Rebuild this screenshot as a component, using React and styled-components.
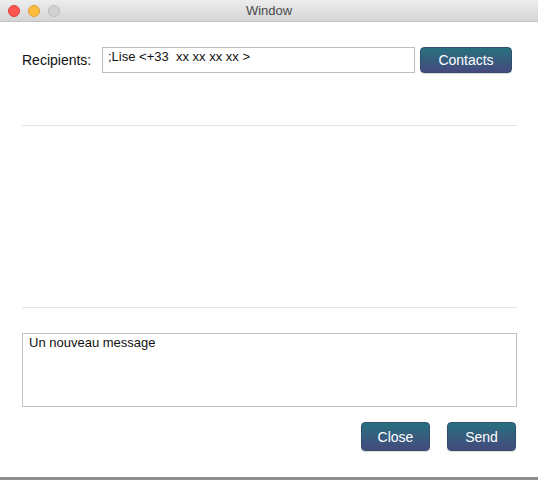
import React from "react";
import styled, { createGlobalStyle } from "styled-components";

const GlobalStyle = createGlobalStyle`
  html, body {
    margin: 0;
    padding: 0;
    background: #8f8f8f;
  }
  body {
    font-family: "Liberation Sans", Arial, sans-serif;
  }
`;

// whole mac-style window
const Window = styled.div`
  width: 538px;
  height: 477px;
  background: #ffffff;
  display: flex;
  flex-direction: column;
  box-shadow: 0 1px 0 #b5b5b5;
`;

const TitleBar = styled.div`
  height: 21px;
  border-bottom: 1px solid #c4c4c4;
  background: linear-gradient(#ededed, #d5d5d5);
  display: flex;
  align-items: center;
  position: relative;
  padding-left: 8px;
`;

const Lights = styled.div`
  display: flex;
  gap: 8px;
`;

const Light = styled.span`
  width: 12px;
  height: 12px;
  border-radius: 50%;
  box-sizing: border-box;
  background: ${(p) => p.color};
  border: 1px solid ${(p) => p.edge};
`;

const Title = styled.div`
  position: absolute;
  left: 0;
  right: 0;
  text-align: center;
  font-size: 13px;
  color: #4a4a4a;
  pointer-events: none;
`;

const Content = styled.div`
  flex: 1;
  padding: 25px 21px 0 22px;
  display: flex;
  flex-direction: column;
`;

const RecipientRow = styled.div`
  display: flex;
  align-items: center;
  height: 26px;
`;

const Label = styled.label`
  width: 80px;
  font-size: 14px;
  color: #111;
`;

const Field = styled.div`
  width: 313px;
  height: 26px;
  box-sizing: border-box;
  border: 1px solid #bdbdbd;
  font-size: 13px;
  color: #111;
  padding: 1px 5px;
  white-space: pre;
  margin-right: 5px;
`;

const Divider = styled.div`
  height: 1px;
  background: #e3e3e3;
  margin-top: ${(p) => p.top}px;
`;

const MessageBox = styled.div`
  margin-top: 25px;
  height: 74px;
  box-sizing: border-box;
  border: 1px solid #c2c2c2;
  font-size: 13px;
  color: #111;
  padding: 1px 6px;
`;

const Actions = styled.div`
  display: flex;
  justify-content: flex-end;
  gap: 17px;
  margin-top: 15px;
  padding-right: 1px;
`;

const Button = styled.button`
  width: ${(p) => p.w}px;
  height: ${(p) => p.h}px;
  border: 1px solid #2f4f6a;
  border-radius: 4px;
  background: linear-gradient(#27707f, #454a7d);
  color: #ffffff;
  font-family: "Liberation Sans", Arial, sans-serif;
  font-size: 14px;
  padding: 0;
  box-shadow: 0 1px 1px rgba(0, 0, 0, 0.15);
`;

export default function App() {
  return (
    <>
      <GlobalStyle />
      <Window>
        <TitleBar>
          <Lights>
            <Light color="#fc5753" edge="#df3d38" />
            <Light color="#fdbc40" edge="#de9f34" />
            <Light color="#d2d2d2" edge="#bcbcbc" />
          </Lights>
          <Title>Window</Title>
        </TitleBar>
        <Content>
          <RecipientRow>
            <Label>Recipients:</Label>
            <Field>{";Lise <+33  xx xx xx xx >"}</Field>
            <Button w={92} h={26}>Contacts</Button>
          </RecipientRow>
          <Divider top={52} />
          <Divider top={181} />
          <MessageBox>Un nouveau message</MessageBox>
          <Actions>
            <Button w={69} h={29}>Close</Button>
            <Button w={69} h={29}>Send</Button>
          </Actions>
        </Content>
      </Window>
    </>
  );
}
